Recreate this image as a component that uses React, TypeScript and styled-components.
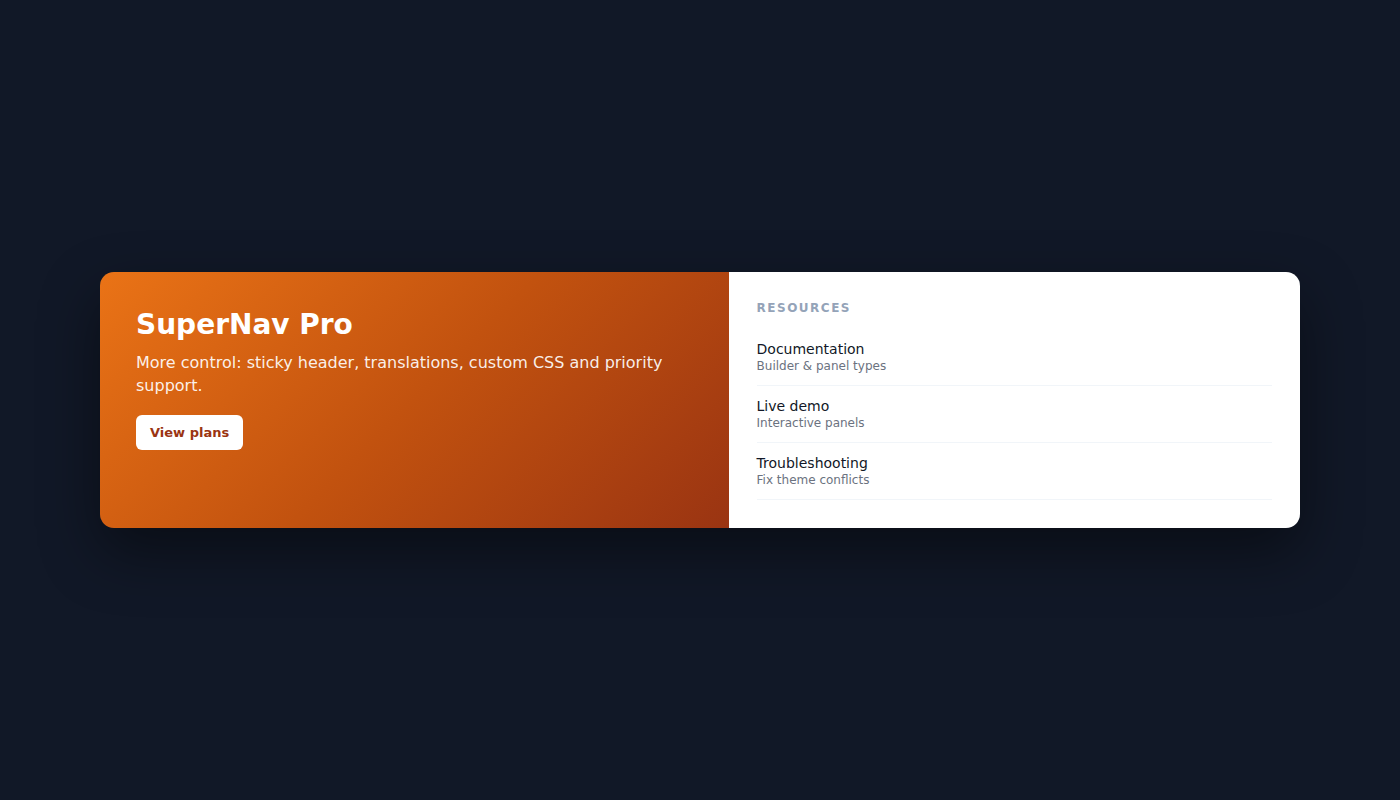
import React from 'react';
import styled, { createGlobalStyle } from 'styled-components';

const GlobalStyle = createGlobalStyle`
  * {
    box-sizing: border-box;
  }

  body {
    margin: 0;
    background-color: #111827;
    font-family: 'DejaVu Sans', 'Noto Sans', sans-serif;
  }
`;

const Page = styled.div`
  min-height: 100vh;
  display: flex;
  align-items: center;
  justify-content: center;
  padding: 0 100px;
`;

const Card = styled.div`
  width: 100%;
  max-width: 1200px;
  display: grid;
  grid-template-columns: 1.1fr 1fr;
  border-radius: 14px;
  overflow: hidden;
  box-shadow: 0 24px 60px rgba(0, 0, 0, 0.45);
`;

const Promo = styled.div`
  padding: 36px;
  background: linear-gradient(135deg, #ea7316 0%, #c2520f 50%, #9a3412 100%);
  color: #ffffff;
`;

const PromoTitle = styled.h2`
  margin: 0 0 10px;
  font-size: 28px;
  font-weight: 700;
  line-height: 33px;
`;

const PromoText = styled.p`
  margin: 0 0 18px;
  font-size: 16px;
  line-height: 23px;
  color: rgba(255, 255, 255, 0.92);
`;

const PlansButton = styled.button`
  font-family: inherit;
  font-size: 13px;
  font-weight: 700;
  line-height: 15px;
  padding: 10px 14px;
  border: none;
  border-radius: 6px;
  background-color: #ffffff;
  color: #9a3412;
  cursor: pointer;
`;

const Resources = styled.div`
  background-color: #ffffff;
  padding: 28px;
`;

const SectionLabel = styled.div`
  font-size: 12px;
  font-weight: 700;
  line-height: 16px;
  letter-spacing: 1.5px;
  text-transform: uppercase;
  color: #94a3b8;
  margin-bottom: 13px;
`;

const LinkList = styled.ul`
  list-style: none;
  margin: 0;
  padding: 0;
`;

const LinkItem = styled.li`
  padding: 12px 0 11px;
  border-bottom: 1px solid #f1f5f9;
`;

const LinkTitle = styled.div`
  font-size: 14px;
  line-height: 17px;
  color: #111827;
`;

const LinkMeta = styled.div`
  margin-top: 1px;
  font-size: 12px;
  line-height: 15px;
  color: #6b7280;
`;

const links = [
  { title: 'Documentation', meta: 'Builder & panel types' },
  { title: 'Live demo', meta: 'Interactive panels' },
  { title: 'Troubleshooting', meta: 'Fix theme conflicts' },
];

export default function App() {
  return (
    <>
      <GlobalStyle />
      <Page>
        <Card>
          <Promo>
            <PromoTitle>SuperNav Pro</PromoTitle>
            <PromoText>
              More control: sticky header, translations, custom CSS and priority support.
            </PromoText>
            <PlansButton>View plans</PlansButton>
          </Promo>
          <Resources>
            <SectionLabel>Resources</SectionLabel>
            <LinkList>
              {links.map((link) => (
                <LinkItem key={link.title}>
                  <LinkTitle>{link.title}</LinkTitle>
                  <LinkMeta>{link.meta}</LinkMeta>
                </LinkItem>
              ))}
            </LinkList>
          </Resources>
        </Card>
      </Page>
    </>
  );
}
